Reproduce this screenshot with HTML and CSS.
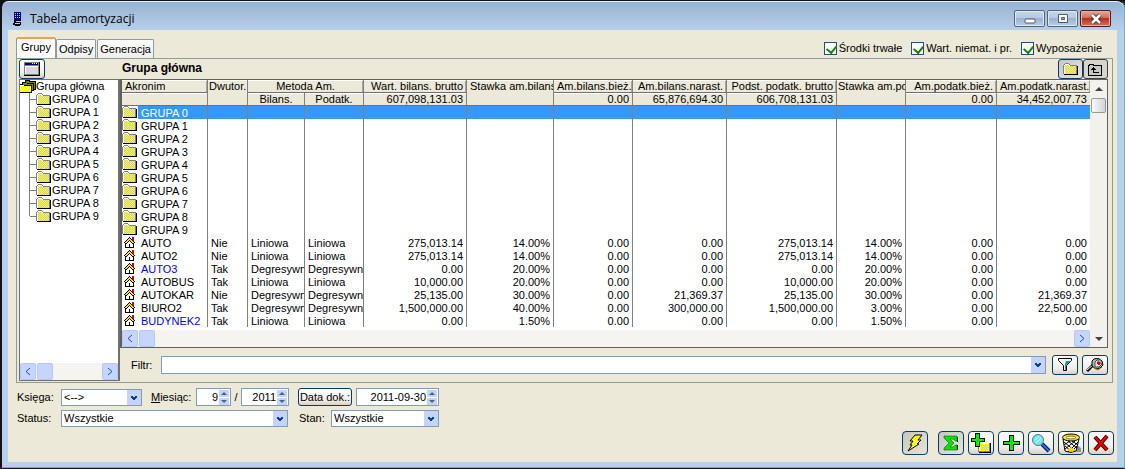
FILE: index.html
```html
<!DOCTYPE html>
<html lang="pl">
<head>
<meta charset="utf-8">
<title>Tabela amortyzacji</title>
<link rel="stylesheet" href="styles.css">
</head>
<body>
<svg class="defs" width="0" height="0" aria-hidden="true">
  <defs>
    <pattern id="dither" width="2" height="2" patternUnits="userSpaceOnUse">
      <rect width="2" height="2" fill="#ffff00"/><rect width="1" height="1" fill="#c8c8c8"/><rect x="1" y="1" width="1" height="1" fill="#c8c8c8"/>
    </pattern>
    <symbol id="folder" viewBox="0 0 15 13">
      <path fill="#000" d="M1 11h13V3h1v9H1z"/>
      <path fill="#808080" d="M0 2h1V1h1V0h4v1h1v1h7v9H0z"/>
      <path fill="#fff" d="M1 2h1V1h4v1h1v1h6v1H2v7H1z"/>
      <path fill="url(#dither)" d="M2 2h4v1h7v8H2z"/>
    </symbol>
    <symbol id="folders" viewBox="0 0 16 13">
      <path fill="#000" d="M5 0h4l1 1h6v9h-2v1h-2v2H0V4h2V2h3z"/>
      <path fill="#808000" d="M6 1h3v1h6v7h-1V3H6zM3 3h4v1h6v6h-1V5H3z"/>
      <path fill="#fff" d="M0 5h4v1h7v6H0z"/>
      <path fill="#ff0" d="M1 6h10v6H1z"/>
      <path fill="#fff" d="M2 7h1v1H2zM4 7h1v1H4zM6 7h1v1H6zM8 7h1v1H8zM3 9h1v1H3zM5 9h1v1H5zM7 9h1v1H7zM9 9h1v1H9z"/>
    </symbol>
    <symbol id="house" viewBox="0 0 11 11">
      <path fill="#000" d="M5 0h1v1h1v1h1v1h1v1h1v1h1v1h-1v5H1V6H0V5h1V4h1V3h1V2h1V1h1z"/>
      <path fill="#fff" d="M5 4h1v1h1v1h1v1h1v3H2V7h1V6h1V5h1z"/>
      <path fill="#ffe000" d="M5 1h1v1h1v1h1v1h1v1h1v1H8V5H7V4H6V3H5v1H4v1H3v1H1V5h1V4h1V3h1V2h1z"/>
      <path fill="#e00000" d="M8 0h2v4H9V3H8z"/><path fill="#000" d="M5 7h1v3H5z"/>
    </symbol>
    <symbol id="chev" viewBox="0 0 14 14">
      <rect width="14" height="14" fill="#c3d3fd"/>
      <path fill="#0a3f8f" d="M4 5h2v1h2V5h2v2H9v1H8v1H6V8H5V7H4z"/>
    </symbol>
    <symbol id="up" viewBox="0 0 10 7"><rect width="10" height="7" fill="#c3d3fd"/><path fill="#4a5f8a" d="M5 2l3 3H2z"/></symbol>
    <symbol id="down" viewBox="0 0 10 7"><rect width="10" height="7" fill="#c3d3fd"/><path fill="#4a5f8a" d="M2 2h6L5 5z"/></symbol>
  </defs>
</svg>
<div class="window">
  <header class="titlebar">
    <svg class="app-icon" width="9" height="14" shape-rendering="crispEdges" aria-hidden="true">
      <rect x="1" width="7" height="8" fill="#000080"/><path stroke="#b8c8ff" stroke-dasharray="1 1" d="M2 1.500h6M2 3.500h6M2 5.500h6"/>
      <path fill="#000" d="M1 8h7v1H3v1h5v1H1zM0 11h2v1h5v-1h1v2H7v1H2v-1H0z"/>
    </svg>
    <h1 class="title">Tabela amortyzacji</h1>
    <div class="caption-buttons">
      <button class="cap" aria-label="Minimalizuj"><svg width="12" height="12"><rect x="1" y="6" width="10" height="4" rx="1" fill="#fff" stroke="#535a68"/></svg></button>
      <button class="cap" aria-label="Maksymalizuj"><svg width="12" height="12"><path fill="#fff" stroke="#535a68" fill-rule="evenodd" d="M1.500 1.500h9v8h-9zM4.500 4.500h3v2h-3z"/></svg></button>
      <button class="cap close" aria-label="Zamknij"><svg width="14" height="12"><path d="M3 2l8 8M11 2l-8 8" stroke="#483040" stroke-width="4.500"/><path d="M3 2l8 8M11 2l-8 8" stroke="#fff" stroke-width="2.500"/></svg></button>
    </div>
  </header>
  <main class="client">
    <div class="top">
      <nav class="tabs" role="tablist">
        <button class="tab active" role="tab" aria-selected="true">Grupy</button>
        <button class="tab" role="tab">Odpisy</button>
        <button class="tab" role="tab">Generacja</button>
      </nav>
      <div class="checks">
        <label class="check"><input type="checkbox" checked>Środki trwałe</label>
        <label class="check"><input type="checkbox" checked>Wart. niemat. i pr.</label>
        <label class="check"><input type="checkbox" checked>Wyposażenie</label>
      </div>
    </div>
    <section class="panel">
      <div class="panel-head">
        <button class="btn tool" aria-label="Okno"><svg width="16" height="14" shape-rendering="crispEdges"><path fill="#000" d="M0 0h16v14H0z"/><path fill="#808080" d="M0 0h15v13H0z"/><path fill="#fff" d="M1 4h13v8H1z"/><path fill="#d8d8d8" d="M2 5h12v7H2z"/><path fill="#000080" d="M1 1h13v2H1z"/><path fill="#fff" d="M8 1h1v1H8zM10 1h1v1h-1zM12 1h1v1h-1z"/></svg></button>
        <h2 class="heading">Grupa główna</h2>
        <div class="pair">
          <button class="btn tool pressed" aria-label="Grupy"><svg width="15" height="13" shape-rendering="crispEdges"><use href="#folder"/></svg></button>
          <button class="btn tool grey" aria-label="W górę"><svg width="15" height="13" shape-rendering="crispEdges"><path fill="#000" d="M1 1h5v1h8v11H0V2h1z"/><path fill="#c8c8c8" d="M2 2h3v1h8v9H1V3h1z"/><path fill="#000" d="M5 4h1v1h1v1h1v1H6v2h5v1H5V7H3V6h1V5h1z"/></svg></button>
        </div>
      </div>
      <div class="work">
        <div class="tree-box">
          <div class="tree">
            <div class="root"><svg width="16" height="13" shape-rendering="crispEdges"><use href="#folders"/></svg>Grupa główna</div>
            <ul class="nodes">
              <li><svg width="15" height="13" shape-rendering="crispEdges"><use href="#folder"/></svg>GRUPA 0</li>
              <li><svg width="15" height="13" shape-rendering="crispEdges"><use href="#folder"/></svg>GRUPA 1</li>
              <li><svg width="15" height="13" shape-rendering="crispEdges"><use href="#folder"/></svg>GRUPA 2</li>
              <li><svg width="15" height="13" shape-rendering="crispEdges"><use href="#folder"/></svg>GRUPA 3</li>
              <li><svg width="15" height="13" shape-rendering="crispEdges"><use href="#folder"/></svg>GRUPA 4</li>
              <li><svg width="15" height="13" shape-rendering="crispEdges"><use href="#folder"/></svg>GRUPA 5</li>
              <li><svg width="15" height="13" shape-rendering="crispEdges"><use href="#folder"/></svg>GRUPA 6</li>
              <li><svg width="15" height="13" shape-rendering="crispEdges"><use href="#folder"/></svg>GRUPA 7</li>
              <li><svg width="15" height="13" shape-rendering="crispEdges"><use href="#folder"/></svg>GRUPA 8</li>
              <li><svg width="15" height="13" shape-rendering="crispEdges"><use href="#folder"/></svg>GRUPA 9</li>
            </ul>
          </div>
          <div class="hscroll"><button aria-label="W lewo"><svg width="6" height="9"><path d="M5 1L1 4.500L5 8" fill="none" stroke="#1f4f9f"/></svg></button><span class="thumb"></span><button class="end" aria-label="W prawo"><svg width="6" height="9"><path d="M1 1l4 3.500L1 8" fill="none" stroke="#1f4f9f"/></svg></button></div>
        </div>
        <div class="right">
          <div class="grid-box">
            <div class="grid-main">
              <table class="grid">
                <colgroup><col class="c1"><col class="c2"><col class="c3"><col class="c4"><col class="c5"><col class="c6"><col class="c7"><col class="c8"><col class="c9"><col class="c10"><col class="c11"><col></colgroup>
                <thead>
                  <tr><th class="left raised">Akronim</th><th class="flat" rowspan="2">Dwutor.</th><th class="raised" colspan="2">Metoda Am.</th><th class="raised num">Wart. bilans. brutto</th><th class="flat lead" rowspan="2">Stawka am.bilans</th><th class="raised num">Am.bilans.bież.</th><th class="raised num">Am.bilans.narast.</th><th class="raised num">Podst. podatk. brutto</th><th class="flat" rowspan="2">Stawka am.po</th><th class="raised num">Am.podatk.bież.</th><th class="raised num">Am.podatk.narast.</th></tr>
                  <tr><th></th><th>Bilans.</th><th>Podatk.</th><th class="num">607,098,131.03</th><th class="num">0.00</th><th class="num">65,876,694.30</th><th class="num">606,708,131.03</th><th class="num">0.00</th><th class="num">34,452,007.73</th></tr>
                </thead>
                <tbody>
                  <tr class="sel"><td><svg width="15" height="13" shape-rendering="crispEdges"><use href="#folder"/></svg><span class="name">GRUPA 0</span></td><td></td><td></td><td></td><td></td><td></td><td></td><td></td><td></td><td></td><td></td><td></td></tr>
                  <tr><td><svg width="15" height="13" shape-rendering="crispEdges"><use href="#folder"/></svg><span class="name">GRUPA 1</span></td><td></td><td></td><td></td><td></td><td></td><td></td><td></td><td></td><td></td><td></td><td></td></tr>
                  <tr><td><svg width="15" height="13" shape-rendering="crispEdges"><use href="#folder"/></svg><span class="name">GRUPA 2</span></td><td></td><td></td><td></td><td></td><td></td><td></td><td></td><td></td><td></td><td></td><td></td></tr>
                  <tr><td><svg width="15" height="13" shape-rendering="crispEdges"><use href="#folder"/></svg><span class="name">GRUPA 3</span></td><td></td><td></td><td></td><td></td><td></td><td></td><td></td><td></td><td></td><td></td><td></td></tr>
                  <tr><td><svg width="15" height="13" shape-rendering="crispEdges"><use href="#folder"/></svg><span class="name">GRUPA 4</span></td><td></td><td></td><td></td><td></td><td></td><td></td><td></td><td></td><td></td><td></td><td></td></tr>
                  <tr><td><svg width="15" height="13" shape-rendering="crispEdges"><use href="#folder"/></svg><span class="name">GRUPA 5</span></td><td></td><td></td><td></td><td></td><td></td><td></td><td></td><td></td><td></td><td></td><td></td></tr>
                  <tr><td><svg width="15" height="13" shape-rendering="crispEdges"><use href="#folder"/></svg><span class="name">GRUPA 6</span></td><td></td><td></td><td></td><td></td><td></td><td></td><td></td><td></td><td></td><td></td><td></td></tr>
                  <tr><td><svg width="15" height="13" shape-rendering="crispEdges"><use href="#folder"/></svg><span class="name">GRUPA 7</span></td><td></td><td></td><td></td><td></td><td></td><td></td><td></td><td></td><td></td><td></td><td></td></tr>
                  <tr><td><svg width="15" height="13" shape-rendering="crispEdges"><use href="#folder"/></svg><span class="name">GRUPA 8</span></td><td></td><td></td><td></td><td></td><td></td><td></td><td></td><td></td><td></td><td></td><td></td></tr>
                  <tr><td><svg width="15" height="13" shape-rendering="crispEdges"><use href="#folder"/></svg><span class="name">GRUPA 9</span></td><td></td><td></td><td></td><td></td><td></td><td></td><td></td><td></td><td></td><td></td><td></td></tr>
                  <tr><td><svg width="15" height="11" shape-rendering="crispEdges"><use href="#house" width="11" height="11" x="2"/></svg><span class="name">AUTO</span></td><td>Nie</td><td>Liniowa</td><td>Liniowa</td><td>275,013.14</td><td>14.00%</td><td>0.00</td><td>0.00</td><td>275,013.14</td><td>14.00%</td><td>0.00</td><td>0.00</td></tr>
                  <tr><td><svg width="15" height="11" shape-rendering="crispEdges"><use href="#house" width="11" height="11" x="2"/></svg><span class="name">AUTO2</span></td><td>Nie</td><td>Liniowa</td><td>Liniowa</td><td>275,013.14</td><td>14.00%</td><td>0.00</td><td>0.00</td><td>275,013.14</td><td>14.00%</td><td>0.00</td><td>0.00</td></tr>
                  <tr><td><svg width="15" height="11" shape-rendering="crispEdges"><use href="#house" width="11" height="11" x="2"/></svg><span class="name blue">AUTO3</span></td><td>Tak</td><td>Degresywna</td><td>Degresywna</td><td>0.00</td><td>20.00%</td><td>0.00</td><td>0.00</td><td>0.00</td><td>20.00%</td><td>0.00</td><td>0.00</td></tr>
                  <tr><td><svg width="15" height="11" shape-rendering="crispEdges"><use href="#house" width="11" height="11" x="2"/></svg><span class="name">AUTOBUS</span></td><td>Tak</td><td>Liniowa</td><td>Liniowa</td><td>10,000.00</td><td>20.00%</td><td>0.00</td><td>0.00</td><td>10,000.00</td><td>20.00%</td><td>0.00</td><td>0.00</td></tr>
                  <tr><td><svg width="15" height="11" shape-rendering="crispEdges"><use href="#house" width="11" height="11" x="2"/></svg><span class="name">AUTOKAR</span></td><td>Nie</td><td>Degresywna</td><td>Degresywna</td><td>25,135.00</td><td>30.00%</td><td>0.00</td><td>21,369.37</td><td>25,135.00</td><td>30.00%</td><td>0.00</td><td>21,369.37</td></tr>
                  <tr><td><svg width="15" height="11" shape-rendering="crispEdges"><use href="#house" width="11" height="11" x="2"/></svg><span class="name">BIURO2</span></td><td>Tak</td><td>Degresywna</td><td>Degresywna</td><td>1,500,000.00</td><td>40.00%</td><td>0.00</td><td>300,000.00</td><td>1,500,000.00</td><td>3.00%</td><td>0.00</td><td>22,500.00</td></tr>
                  <tr><td><svg width="15" height="11" shape-rendering="crispEdges"><use href="#house" width="11" height="11" x="2"/></svg><span class="name blue">BUDYNEK2</span></td><td>Tak</td><td>Liniowa</td><td>Liniowa</td><td>0.00</td><td>1.50%</td><td>0.00</td><td>0.00</td><td>0.00</td><td>1.50%</td><td>0.00</td><td>0.00</td></tr>
                </tbody>
              </table>
              <div class="hscroll"><button aria-label="W lewo"><svg width="6" height="9"><path d="M5 1L1 4.500L5 8" fill="none" stroke="#1f4f9f"/></svg></button><span class="thumb"></span><button class="end" aria-label="W prawo"><svg width="6" height="9"><path d="M1 1l4 3.500L1 8" fill="none" stroke="#1f4f9f"/></svg></button></div>
            </div>
            <div class="vscroll"><button aria-label="W górę"><svg width="8" height="4"><path d="M4 0l4 4H0z" fill="#404040"/></svg></button><span class="vthumb"></span><button class="end" aria-label="W dół"><svg width="8" height="4"><path d="M0 0h8L4 4z" fill="#404040"/></svg></button></div>
          </div>
          <div class="filter">
            <label for="filtr">Filtr:</label>
            <div class="combo grow"><select id="filtr"><option></option></select><svg class="arrow" shape-rendering="crispEdges"><use href="#chev"/></svg></div>
            <button class="btn tool" aria-label="Filtruj"><svg width="16" height="14"><path fill="#e8f4f4" stroke="#000" d="M1.500 .5h13v2l-5 5v5h-3v-5l-5-5z"/><path fill="#2f8f8f" d="M9 3h5L9 7v5H8V6z"/><path fill="#fff" d="M2 1h12v1H2z"/></svg></button>
            <button class="btn tool" aria-label="Konstruktor"><svg width="18" height="14"><path d="M1 13L7 7" stroke="#000" stroke-width="3"/><path d="M1 12L8 6" stroke="#fff"/><path d="M6 3l2-2 4-1 4 3 1 4-3 3-4 1-4-3z" fill="#a8b8b8" stroke="#000"/><path d="M9 4l3-3v3l4 2-3 3H9z" fill="#e8e8e8" stroke="#404848"/><path fill="#e00000" d="M11 4h3v3h-3z"/><path fill="#ff0" d="M11 6h1v1h-1z"/><path d="M8 10l4 2 4-3" fill="none" stroke="#808000"/></svg></button>
          </div>
        </div>
      </div>
    </section>
    <div class="form">
      <div class="line">
        <label class="lab" for="ks">Księ<u>g</u>a:</label>
        <div class="combo ks"><select id="ks"><option>&lt;--&gt;</option></select><svg class="arrow" shape-rendering="crispEdges"><use href="#chev"/></svg></div>
        <label class="lab mies" for="mc"><u>M</u>iesiąc:</label>
        <div class="spin month"><input id="mc" type="text" value="9"><span class="steps"><button aria-label="Więcej"><svg width="10" height="7"><use href="#up"/></svg></button><button aria-label="Mniej"><svg width="10" height="7"><use href="#down"/></svg></button></span></div>
        <span class="slash">/</span>
        <div class="spin year"><input type="text" value="2011" aria-label="Rok"><span class="steps"><button aria-label="Więcej"><svg width="10" height="7"><use href="#up"/></svg></button><button aria-label="Mniej"><svg width="10" height="7"><use href="#down"/></svg></button></span></div>
        <button class="btn datebtn">Data dok.:</button>
        <div class="spin date"><input type="text" value="2011-09-30" aria-label="Data dokumentu"><span class="steps"><button aria-label="Więcej"><svg width="10" height="7"><use href="#up"/></svg></button><button aria-label="Mniej"><svg width="10" height="7"><use href="#down"/></svg></button></span></div>
      </div>
      <div class="line">
        <label class="lab" for="st">Status:</label>
        <div class="combo st"><select id="st"><option>Wszystkie</option></select><svg class="arrow" shape-rendering="crispEdges"><use href="#chev"/></svg></div>
        <label class="lab stan" for="sn">Stan:</label>
        <div class="combo sn"><select id="sn"><option>Wszystkie</option></select><svg class="arrow" shape-rendering="crispEdges"><use href="#chev"/></svg></div>
      </div>
    </div>
    <div class="actions">
      <button class="btn act pressed first" aria-label="Przelicz"><svg width="18" height="18"><path d="M9 1h7l-4 5h3l-4 4h2L2 17l4-6H4l3-4H4z" fill="#ff0" stroke="#000"/></svg></button>
      <button class="btn act pressed" aria-label="Suma"><svg width="18" height="18"><path d="M3 16h13v-5h-1v4zM15 3h1v5h-1zM9 10l2-1-2-2z" fill="#000"/><path d="M2 2h13v5h-2q0-2-3-2H8l4 4-4 4h2q3 0 3-2h2v5H2v-2l5-5-5-5z" fill="#00e800" stroke="#004000" stroke-width="0.500"/></svg></button>
      <button class="btn act" aria-label="Dodaj grupę"><svg width="20" height="20" shape-rendering="crispEdges"><path fill="#000" d="M8 10h12v10H8z"/><path fill="#808080" d="M7 10h12v9H7z"/><path fill="#fff" d="M8 10h10v8H8z"/><path fill="#ff0" d="M9 11h9v7H9z"/><path fill="url(#dither)" d="M10 12h7v5h-7z"/><path fill="#000" d="M4 0h5v5h5v4H9v5H4V9H0V5h4z"/><path fill="#00f000" d="M5 1h3v5h5v2H8v5H5V8H1V6h4z"/></svg></button>
      <button class="btn act" aria-label="Dodaj"><svg width="18" height="18" shape-rendering="crispEdges"><path fill="#000" d="M7 1h5v6h6v4h-6v6H7v-6H1V7h6z"/><path fill="#00f000" d="M8 2h3v6h6v2h-6v6H8v-6H2V8h6z"/></svg></button>
      <button class="btn act" aria-label="Podgląd"><svg width="20" height="20"><path d="M11 11l7 7" stroke="#000060" stroke-width="4"/><path d="M11 11l7 7" stroke="#1080f0" stroke-width="2"/><circle cx="7" cy="7" r="5.500" fill="#70e8f8" stroke="#607880"/><path d="M4 7l4-4M5 10l5-5" stroke="#d8ffff"/></svg></button>
      <button class="btn act" aria-label="Usuń"><svg width="21" height="20"><path d="M15 19h5v-4l-4-3z" fill="#909090"/><path d="M2 6l2 12q6 3 11 0L18 6z" fill="#fff" stroke="#000"/><path d="M3 9l11 9M7 8l9 7M4 13l7 6M11 8l6 4M14 8L4 16M17 9L7 19M9 8l-6 4M16 13l-6 6" stroke="#000"/><ellipse cx="10" cy="4.500" rx="8.500" ry="3.500" fill="#ffee20" stroke="#000"/><ellipse cx="10" cy="4.500" rx="5" ry="1.500" fill="#fff" stroke="#807000"/><path d="M6 17l4-3 5 3-4 2z" fill="#e8d800"/></svg></button>
      <button class="btn act" aria-label="Zamknij okno"><svg width="18" height="18"><path d="M3 3l12 13M15 2L3 16" stroke="#000" stroke-width="4"/><path d="M3 3l12 13M15 2L3 16" stroke="#f00000" stroke-width="2.500"/></svg></button>
    </div>
  </main>
</div>
</body>
</html>
```
FILE: styles.css
```css
* { box-sizing: border-box; }
body { margin: 0; background: #101418; font: 11px/13px "Liberation Sans", Arial, sans-serif; color: #000; }
button, input, select { font: inherit; color: inherit; margin: 0; padding: 0; }
button { border: 0; background: none; }
svg { display: block; flex: none; }
.defs { position: absolute; }

.window { display: flex; flex-direction: column; min-height: 100vh; padding: 0 7px 6px 6px; background: linear-gradient(#97b1d2, #b8d0ea 30px, #b8d0ea); border: 1px solid #101418; border-left-width: 2px; border-right-color: #34c8dc; border-radius: 8px 8px 0 0; box-shadow: inset 0 1px #e6f0fa, inset 0 -1px #34c8dc; }
.titlebar { display: flex; align-items: flex-start; height: 29px; padding: 9px 6px 0 5px; }
.app-icon { margin-top: 2px; }
.title { flex: 1; margin: 0 0 0 8px; font: 12px/17px "Open Sans", "Noto Sans", sans-serif; }
.caption-buttons { display: flex; gap: 2px; }
.cap { display: flex; align-items: center; justify-content: center; width: 31px; height: 17px; border: 1px solid #4f6580; border-radius: 2px; background: linear-gradient(#c8d8ea, #b4c8e0 48%, #98b2d0 50%, #b8d0ea); box-shadow: inset 0 0 0 1px #dce8f4; }
.cap.close { border-color: #4a1c20; background: linear-gradient(#e4a898, #d06a58 48%, #b8301c 50%, #d87058); box-shadow: inset 0 0 0 1px #e8b0a4; }

.client { flex: 1; padding: 7px 4px 5px 8px; background: #ece9d8; }
.top { display: flex; justify-content: space-between; height: 21px; }
.tabs { display: flex; align-items: flex-end; }
.tab { height: 19px; padding: 0 2px; margin-right: 1px; border: 1px solid #919b9c; border-bottom: 0; border-radius: 2px 2px 0 0; background: linear-gradient(#fff, #f0eeea); }
.tab.active { height: 21px; padding: 0 4px 2px; margin-right: 0; border-top: 2px solid #f0a050; background: #fff; }
.checks { display: flex; gap: 9px; padding: 5px 11px 0 0; }
.check { display: flex; align-items: center; gap: 2px; height: 13px; }
.check input { appearance: none; position: relative; width: 13px; height: 13px; border: 1px solid #1c5180; background: #fff; }
.check input::after { content: ""; position: absolute; left: 3px; top: 1px; width: 5px; height: 7px; border: solid #128012; border-width: 0 2px 2px 0; transform: rotate(40deg); }

.panel { padding: 0 4px 1px 2px; border: 1px solid #919b9c; }
.panel-head { display: flex; height: 20px; }
.btn { display: flex; align-items: center; justify-content: center; flex: none; border: 1px solid #003c74; border-radius: 3px; background: linear-gradient(#fff, #f0eee6 70%, #d8d0c4); }
.tool { width: 26px; height: 20px; }
.pressed { background: linear-gradient(135deg, #c8c6be, #e6e4da); }
.grey { border-color: #404040; background: #d6d4cc; }
.heading { flex: 1; margin: 0; padding-left: 77px; font: bold 12px/18px "Liberation Sans", Arial, sans-serif; }
.pair { display: flex; }
.pair .tool { width: 25px; }
.work { display: flex; }
.tree-box { display: flex; flex-direction: column; width: 101px; border: 1px solid #707070; border-right-width: 2px; background: #fff; }
.tree { flex: 1; }
.root { display: flex; height: 13px; white-space: nowrap; }
.nodes { margin: 0; padding: 0 0 0 9px; list-style: none; }
.nodes li { display: flex; align-items: center; gap: 1px; height: 13px; border-left: 1px solid #808080; }
.nodes li::before { content: ""; width: 7px; height: 1px; background: #808080; }
.nodes li:last-child { border-image: linear-gradient(#808080 50%, transparent 50%) 1; }
.nodes li svg { margin-left: -2px; }
.hscroll { display: flex; gap: 1px; height: 17px; background: #f6f4f0; }
.hscroll button, .thumb { display: flex; align-items: center; justify-content: center; width: 16px; border: 1px solid #b4c8f6; border-radius: 2px; background: #c6d5fd; }
.hscroll .end { margin-left: auto; }

.right { flex: 1; min-width: 0; }
.grid-box { display: flex; border: 1px solid #606060; border-left-width: 2px; background: #fff; }
.grid-main { display: flex; flex-direction: column; gap: 3px; flex: 1; min-width: 0; }
.grid { width: 100%; table-layout: fixed; border-collapse: separate; border-spacing: 0; }
.c1 { width: 86px; } .c2 { width: 40px; } .c3 { width: 57px; } .c4 { width: 59px; } .c5 { width: 103px; } .c6 { width: 87px; }
.c7 { width: 79px; } .c8 { width: 94px; } .c9 { width: 110px; } .c10 { width: 69px; } .c11 { width: 91px; }
.grid th, .grid td { height: 13px; padding: 0 3px; border-right: 1px solid #808080; overflow: hidden; white-space: nowrap; font-weight: normal; line-height: 12px; text-align: left; }
.grid th { border-bottom: 1px solid #707070; background: #ece9d8; text-align: center; box-shadow: inset 0 1px #fff; }
.grid th.left { text-align: left; }
.grid th.flat { padding: 0 0 0 1px; vertical-align: top; text-align: left; }
.grid th.lead { padding-left: 3px; }
.grid th.raised { box-shadow: inset 0 1px #fff, inset -1px 0 #a8a498; }
.grid th.num { text-align: right; }
.grid td:nth-child(n+5) { text-align: right; }
.grid th:last-child, .grid td:last-child { border-right: 0; }
.grid td:first-child { display: flex; align-items: center; padding: 0; }
.name { flex: 1; padding: 1px 0 0 4px; line-height: 12px; }
.blue { color: #0000ff; }
.sel td { background: #3399ff; color: #fff; }
.sel td:first-child { background: linear-gradient(90deg, #fff 16px, #3399ff 16px); }
.vscroll { display: flex; flex-direction: column; width: 17px; background: #f2f1ee; }
.vscroll button { display: flex; align-items: center; justify-content: center; width: 17px; height: 17px; }
.vthumb { width: 15px; height: 15px; margin: 1px; border: 1px solid #989898; border-radius: 2px; background: linear-gradient(90deg, #f8f8f8, #d4d4d8); }
.vscroll .end { margin-top: auto; }

.filter { display: flex; align-items: center; padding: 7px 0 6px 11px; }
.filter label { width: 30px; }
.combo { position: relative; height: 17px; }
.combo select { appearance: none; display: block; width: 100%; height: 100%; padding: 0 16px 0 2px; border: 1px solid #7f9db9; border-radius: 0; background: #fff; }
.arrow { position: absolute; right: 1px; top: 1px; width: 14px; height: calc(100% - 2px); background: #c3d3fd; pointer-events: none; }
.combo.grow { flex: 1; height: 18px; margin-right: 6px; }
.filter .tool + .tool { margin-left: 4px; }

.form { display: flex; flex-direction: column; gap: 3px; padding: 5px 0 0 1px; }
.line { display: flex; align-items: center; height: 18px; }
.lab { width: 44px; }
.ks { width: 81px; }
.mies { width: 54px; padding-left: 9px; }
.spin { display: flex; height: 18px; border: 1px solid #7f9db9; background: #fff; }
.spin input { flex: 1; min-width: 0; padding-right: 1px; border: 0; background: none; text-align: right; }
.steps { display: flex; flex-direction: column; gap: 1px; width: 11px; padding-top: 1px; }
.steps button { width: 10px; height: 7px; }
.month { width: 35px; }
.slash { width: 10px; text-align: center; }
.year { width: 48px; }
.datebtn { width: 54px; height: 18px; margin: 0 4px 0 9px; }
.date { width: 83px; }
.st { width: 227px; }
.stan { width: 43px; padding-left: 11px; }
.sn { width: 108px; }

.actions { display: flex; justify-content: flex-end; gap: 4px; padding: 4px 0 0; margin-right: -1px; }
.act { width: 26px; height: 24px; border-radius: 4px; }
.first { margin-right: 6px; }
```
